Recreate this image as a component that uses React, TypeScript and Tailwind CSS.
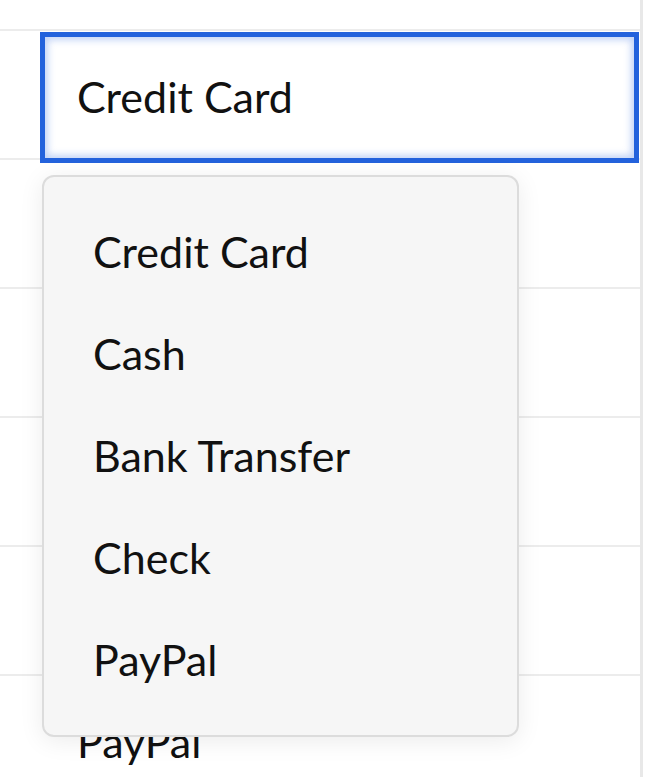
import React from 'react';

const options = ['Credit Card', 'Cash', 'Bank Transfer', 'Check', 'PayPal'];
// rows under the open menu are covered, only the last one shows
const rows = ['', '', '', '', 'PayPal'];

export default function App() {
  return (
    <div className="relative h-[777px] w-[645px] overflow-hidden bg-white font-['Lato',sans-serif] text-[43px] text-[#111]">
      <div className="w-[643px] border-r-[3px] border-[#e8e8e8]">
        <div className="h-[31px] border-b-2 border-[#ececec]" />

        <div className="h-[129px] border-b-2 border-[#ececec] pl-[40px] pr-px pt-px">
          <div className="relative z-10 flex h-[131px] items-center border-[5px] border-[#2362dc] bg-white pl-[32px] shadow-[inset_0_0_7px_3px_rgba(80,130,230,0.35)]">
            Credit Card
          </div>
        </div>

        {rows.map((label, i) => (
          <div key={i} className="flex h-[129px] items-center border-b-2 border-[#ececec] pl-[77px] pt-[6px]">
            {label}
          </div>
        ))}
      </div>

      <div className="absolute left-[42px] top-[175px] z-20 w-[477px] rounded-[12px] border-2 border-[#dcdcdc] bg-[#f6f6f6] py-[24px] shadow-[0_4px_24px_rgba(0,0,0,0.08)]">
        {options.map((opt) => (
          <div key={opt} className="flex h-[102px] items-center pl-[49px]">
            {opt}
          </div>
        ))}
      </div>
    </div>
  );
}
